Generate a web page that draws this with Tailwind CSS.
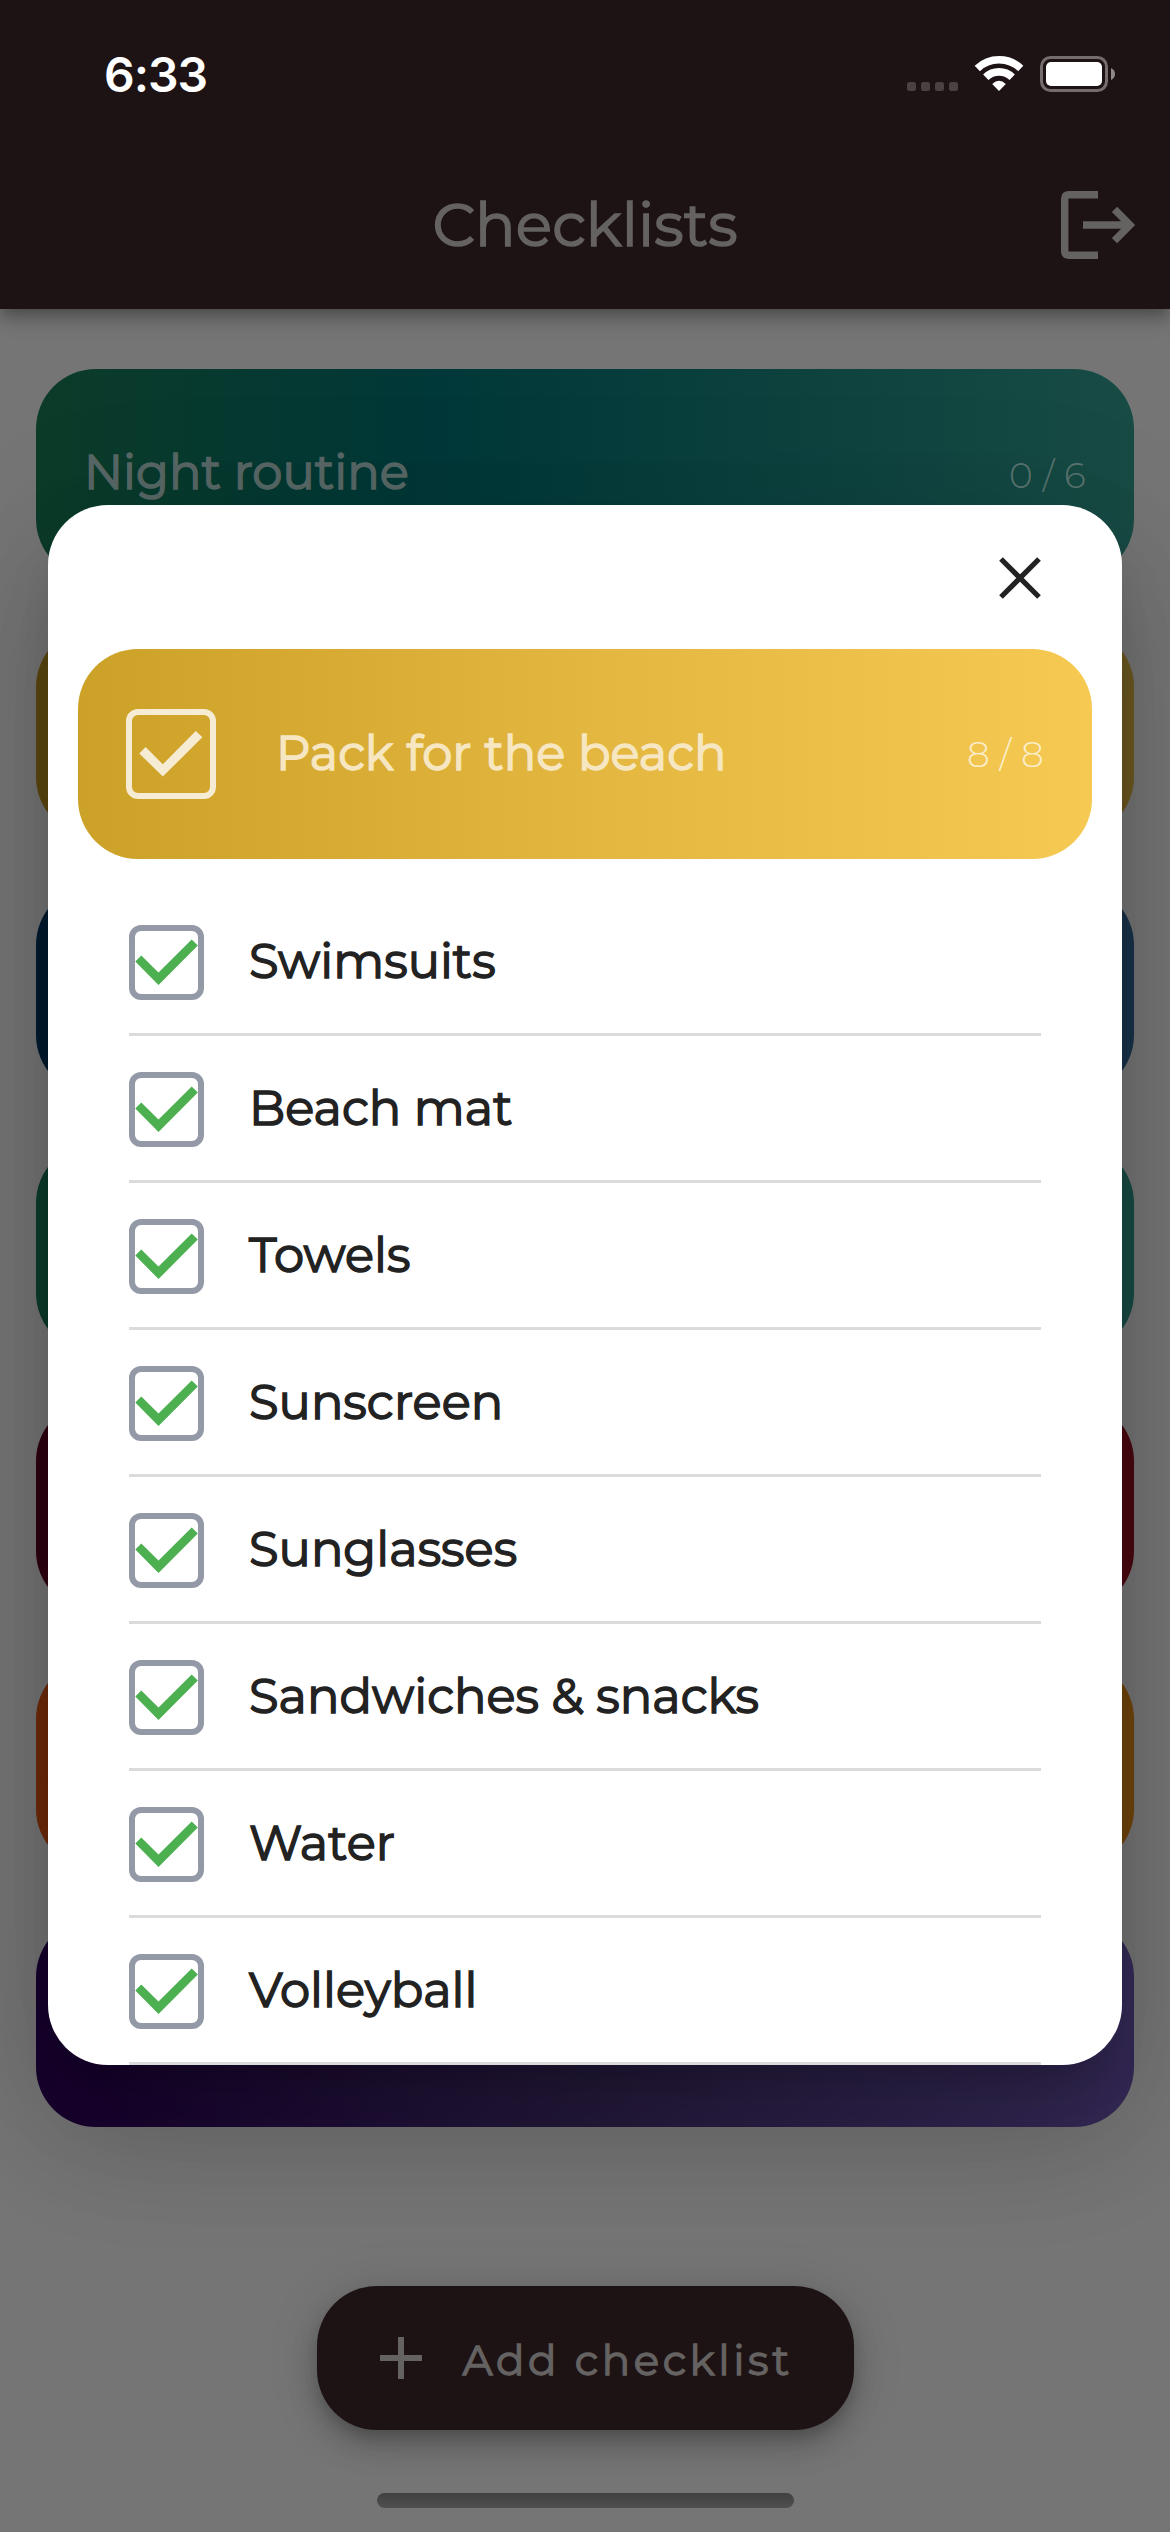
<!DOCTYPE html>
<html lang="en">
<head>
<meta charset="utf-8">
<title>Checklists</title>
<script src="https://cdn.jsdelivr.net/npm/@tailwindcss/browser@4"></script>
</head>
<body class="relative h-[2532px] w-[1170px] overflow-hidden bg-[#757575] font-['Montserrat','Inter',sans-serif] font-normal text-[#222222]">

<!-- Page beneath the dialog -->
<div class="flex h-[2532px] flex-col">
  <header class="relative z-10 flex h-[309px] shrink-0 flex-col bg-[#1e1314] shadow-[0_6px_12px_-3px_rgba(0,0,0,0.2),0_12px_15px_0_rgba(0,0,0,0.14),0_3px_30px_0_rgba(0,0,0,0.12)]">
    <div class="flex h-[141px] items-start justify-between pt-[50px] pr-[54px] pl-[104px]">
      <span class="font-['Inter'] text-[48px] leading-[49px] font-semibold tracking-[-1px] text-white">6:33</span>
      <svg class="mt-[3px] h-[42px] w-[210px]" viewBox="906 53 210 42">
        <g fill="#4b4142"><rect x="907" y="82" width="9" height="9" rx="2.5"/><rect x="921" y="82" width="9" height="9" rx="2.5"/><rect x="935" y="82" width="9" height="9" rx="2.5"/><rect x="949" y="82" width="9" height="9" rx="2.5"/></g>
        <g fill="none" stroke="#fff" stroke-width="7.6"><path d="M977.3 68.4A31.5 31.5 0 0 1 1020.7 68.4"/><path d="M985.8 77.2A19 19 0 0 1 1012.2 77.2"/></g>
        <path d="M999 91L992.2 84Q999 77.6 1005.8 84Z" fill="#fff"/>
        <rect x="1041.5" y="57.5" width="65" height="33" rx="9" fill="none" stroke="#746c6d" stroke-width="3"/>
        <rect x="1046" y="62" width="56" height="24" rx="5" fill="#fff"/>
        <path d="M1111 68Q1115 70 1115 74T1111 80Z" fill="#8e898a"/>
      </svg>
    </div>
    <div class="grid h-[168px] grid-cols-[1fr_auto_1fr] items-center pr-[34px] pl-[34px]">
      <h1 class="col-start-2 text-[60px] leading-[72px] tracking-[0.15px] text-[#656262] [-webkit-text-stroke:1.6px_#656262]">Checklists</h1>
      <svg class="h-[68px] w-[76px] justify-self-end" viewBox="1060 191 76 68" fill="none" stroke="#656262" stroke-width="7.4">
        <path d="M1098 194.8H1069Q1064.7 194.8 1064.7 199V251Q1064.7 255.2 1069 255.2H1098"/>
        <path d="M1083 225H1129"/><path d="M1114.5 209.3L1130 225L1114.5 240.7"/>
      </svg>
    </div>
  </header>

  <main class="flex flex-col gap-12 px-9 pt-[60px]">
    <section class="flex h-[210px] items-center justify-between rounded-[60px] bg-[linear-gradient(90deg,#0c3b28_0%,#003738_36%,#184b44_100%)] px-12">
      <h2 class="pb-1 text-[48px] leading-[60px] tracking-[0.05px] text-[#576765] [-webkit-text-stroke:1.5px_#576765]">Night routine</h2>
      <span class="pt-0.5 text-[36px] leading-[44px] font-light tracking-[0.3px] text-[#5a7370]">0 / 6</span>
    </section>
    <section class="h-[210px] rounded-[60px] bg-[linear-gradient(90deg,#5c4710_0%,#6d5821_100%)]"></section>
    <section class="h-[210px] rounded-[60px] bg-[linear-gradient(90deg,#001b30_0%,#1a334b_100%)]"></section>
    <section class="h-[210px] rounded-[60px] bg-[linear-gradient(90deg,#0c3b2b_0%,#184b44_100%)]"></section>
    <section class="h-[210px] rounded-[60px] bg-[linear-gradient(90deg,#2f0012_0%,#4b0912_100%)]"></section>
    <section class="h-[210px] rounded-[60px] bg-[linear-gradient(90deg,#6e2a0b_0%,#70450c_100%)]"></section>
    <section class="h-[210px] rounded-[60px] bg-[linear-gradient(90deg,#17002e_0%,#251a3c_50%,#362a58_100%)]"></section>
  </main>

  <footer class="mt-auto flex flex-col items-center gap-[63px] pb-6">
    <button class="flex h-36 w-[537px] items-center rounded-[60px] bg-[#1e1314] pl-[63px] shadow-[0_9px_15px_-3px_rgba(0,0,0,0.2),0_18px_30px_0_rgba(0,0,0,0.14),0_3px_54px_0_rgba(0,0,0,0.12)]">
      <svg class="h-[42px] w-[42px]" viewBox="0 0 42 42" stroke="#656262" stroke-width="6"><path d="M0 21H42M21 0V42"/></svg>
      <span class="ml-[41px] pt-1 text-[42px] leading-[52px] tracking-[3.6px] text-[#656262] [-webkit-text-stroke:1.3px_#656262]">Add checklist</span>
    </button>
    <div class="h-[15px] w-[417px] rounded-full bg-linear-to-b from-[#404040] to-[#505050]"></div>
  </footer>
</div>

<!-- Checklist dialog -->
<div role="dialog" class="absolute top-[505px] left-12 z-20 h-[1560px] w-[1074px] rounded-[60px] shadow-[0_33px_45px_-21px_rgba(0,0,0,0.2),0_72px_114px_9px_rgba(0,0,0,0.14),0_27px_138px_24px_rgba(0,0,0,0.08)]">
  <div class="flex h-full flex-col overflow-hidden rounded-[60px] bg-white px-[30px]">
    <div class="flex h-[144px] shrink-0 items-center justify-end pt-0.5 pr-[51px]">
      <svg class="h-[42px] w-[42px]" viewBox="0 0 42 42" stroke="#222" stroke-width="5.2"><path d="M2 2L40 40M40 2L2 40"/></svg>
    </div>
    <div class="flex h-[210px] shrink-0 items-center rounded-[60px] bg-[linear-gradient(90deg,#cca127_0%,#e4b740_52%,#f5c952_100%)] px-12">
      <svg class="h-[90px] w-[90px]" viewBox="0 0 90 90"><rect x="3" y="3" width="84" height="84" rx="9" fill="none" stroke="#f6ecd3" stroke-width="6"/><path d="M13.3 44.5L19.6 38L36.8 55.3L69.8 22L76.4 28.3L36.8 67.5Z" fill="#f6ecd3"/></svg>
      <h2 class="ml-[60px] grow pb-0.5 text-[48px] leading-[60px] tracking-[0.05px] text-[#f6e7c2] [-webkit-text-stroke:1.5px_#f6e7c2]">Pack for the beach</h2>
      <span class="text-[36px] leading-[44px] font-light tracking-[0.3px] text-[#fbeecb]">8 / 8</span>
    </div>
    <ul id="items" class="mt-[30px] flex shrink-0 flex-col px-[51px]"></ul>
  </div>
</div>

<script>
const items = ['Swimsuits', 'Beach mat', 'Towels', 'Sunscreen', 'Sunglasses', 'Sandwiches & snacks', 'Water', 'Volleyball'];
document.getElementById('items').innerHTML = items.map(t => `
  <li class="flex h-[147px] items-center gap-[45px] border-b-[3px] border-[#dbdbdb] pt-[3px]">
    <svg class="h-[75px] w-[75px]" viewBox="0 0 75 75"><rect x="3" y="3" width="69" height="69" rx="9" fill="none" stroke="#9499a7" stroke-width="6"/><path d="M6.3 36.5L12.3 30.5L29.5 47.6L62.7 14.5L68.8 20.6L29.5 60Z" fill="#4caf50"/></svg>
    <span class="pb-1 text-[48px] leading-[60px] tracking-[0.05px] [-webkit-text-stroke:1.5px_#222222]">${t.replace('&', '&amp;')}</span>
  </li>`).join('');
</script>
</body>
</html>
